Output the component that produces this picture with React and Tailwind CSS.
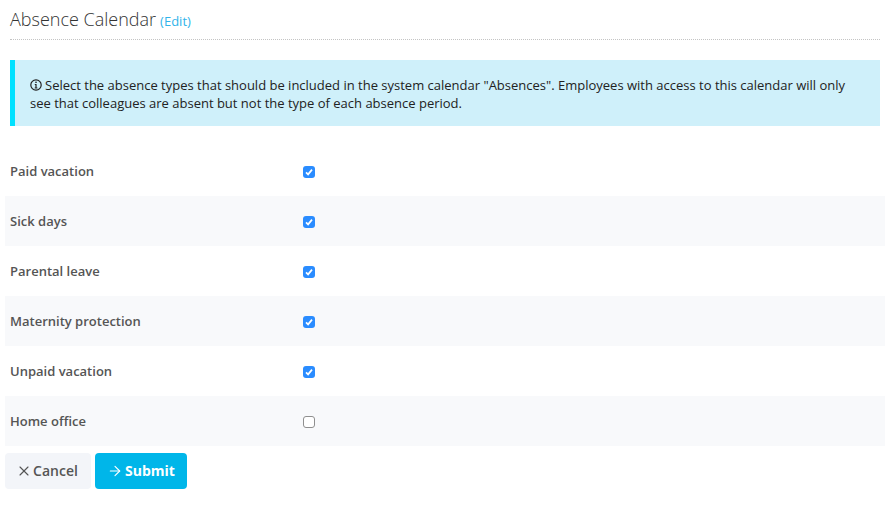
import React from "react";
import { X, ArrowRight } from "lucide-react";

const rows = [
  ["Paid vacation", true],
  ["Sick days", true],
  ["Parental leave", true],
  ["Maternity protection", true],
  ["Unpaid vacation", true],
  ["Home office", false],
];

function InfoIcon() {
  return (
    <svg viewBox="0 0 12 12" className="inline-block w-[12px] h-[12px] align-[-1px] mr-[3px]" fill="none">
      <circle cx="6" cy="6" r="5.2" stroke="#222" strokeWidth="1.2" />
      <rect x="5.3" y="2.6" width="1.4" height="1.4" fill="#222" />
      <path d="M4.8 5.1H6.6V8.6H7.4V9.4H4.7V8.6H5.4V5.9H4.8Z" fill="#222" />
    </svg>
  );
}

function Check({ checked }) {
  return checked ? (
    <span className="w-[12px] h-[12px] rounded-[3px] bg-[#2a8cff] flex items-center justify-center">
      <svg viewBox="0 0 12 12" className="w-[12px] h-[12px]" fill="none">
        <path d="M3 6.3L5.1 8.4L9 3.6" stroke="#fff" strokeWidth="1.7" />
      </svg>
    </span>
  ) : (
    <span className="w-[12px] h-[12px] rounded-[3px] bg-white border border-[#8f8f8f]" />
  );
}

export default function App() {
  return (
    <div className="w-[890px] h-[514px] bg-white px-[5px] font-['Open_Sans',sans-serif] overflow-hidden">
      <div className="mx-[5px] h-[40px] border-b border-dotted border-[#c4c4c4] flex items-baseline pt-[7px]">
        <span className="text-[18px] leading-[24px] font-light text-[#333]">Absence Calendar</span>
        <span className="text-[13px] text-[#30b4ea] ml-[4px]">(Edit)</span>
      </div>
      <div className="mx-[5px] mt-[20px] h-[66px] bg-[#cff0fa] border-l-[5px] border-[#00e1ff] pl-[15px] pr-[15px] pt-[16px] text-[13px] leading-[18px] text-[#222]">
        <InfoIcon />
        Select the absence types that should be included in the system calendar "Absences". Employees with access to this calendar will only see that colleagues are absent but not the type of each absence period.
      </div>
      <div className="mt-[20px]">
        {rows.map(([label, checked], i) => (
          <div key={label} className={`h-[50px] flex items-center pl-[5px] ${i % 2 === 1 ? "bg-[#f8f9fb]" : "bg-white"}`}>
            <span className="w-[293px] text-[13px] leading-[20px] mb-[1px] font-semibold text-[#555]">{label}</span>
            <span className="flex mt-[1px]"><Check checked={checked} /></span>
          </div>
        ))}
      </div>
      <div className="mt-[7px] flex gap-[4px]">
        <button className="w-[86px] h-[36px] pb-[1px] pr-[2px] rounded-[4px] bg-[#f3f5f9] text-[14px] font-semibold text-[#555] flex items-center justify-center gap-[1px]">
          <X size={16} strokeWidth={1.7} />
          Cancel
        </button>
        <button className="w-[92px] h-[36px] pb-[1px] rounded-[4px] bg-[#00b6e9] text-[14px] font-bold text-white flex items-center justify-center gap-[2px]">
          <ArrowRight size={16} strokeWidth={1.7} />
          Submit
        </button>
      </div>
    </div>
  );
}
